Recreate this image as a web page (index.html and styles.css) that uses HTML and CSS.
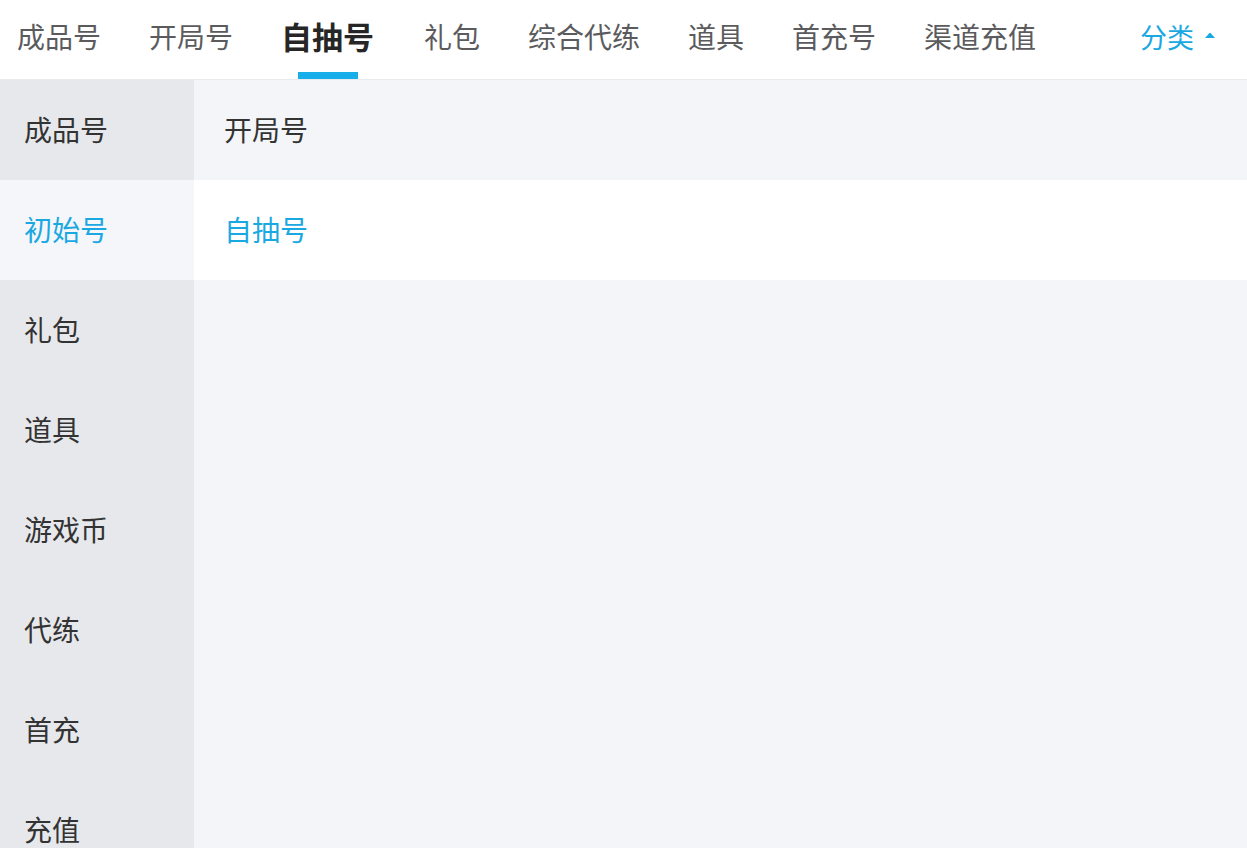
FILE: index.html
```html
<!DOCTYPE html>
<html lang="zh-CN">
<head>
    <meta charset="UTF-8">
    <meta name="viewport" content="width=device-width, initial-scale=1.0">
    <title>分类</title>
    <link rel="stylesheet" href="styles.css">
</head>
<body>
    <div class="page">
        <div class="top-bar">
            <div class="tabs">
                <span class="tab">成品号</span>
                <span class="tab">开局号</span>
                <span class="tab active">自抽号</span>
                <span class="tab">礼包</span>
                <span class="tab">综合代练</span>
                <span class="tab">道具</span>
                <span class="tab">首充号</span>
                <span class="tab">渠道充值</span>
            </div>
            <div class="category-toggle">
                分类
                <svg class="arrow" width="12" height="6" viewBox="0 0 12 6">
                    <path d="M1 6 L5 1.4 Q6 0.3 7 1.4 L11 6 Z" fill="#1aa8e2"/>
                </svg>
            </div>
        </div>

        <div class="content">
            <div class="side-menu">
                <div class="side-item">成品号</div>
                <div class="side-item selected">初始号</div>
                <div class="side-item">礼包</div>
                <div class="side-item">道具</div>
                <div class="side-item">游戏币</div>
                <div class="side-item">代练</div>
                <div class="side-item">首充</div>
                <div class="side-item">充值</div>
            </div>
            <div class="sub-list">
                <div class="sub-item">开局号</div>
                <div class="sub-item selected">自抽号</div>
            </div>
        </div>
    </div>
</body>
</html>
```

FILE: styles.css
```css
/* Página de categorias */
html, body {
    margin: 0;
    padding: 0;
    height: 100%;
    overflow: hidden;
}

body {
    font-family: "Noto Sans CJK SC", "Noto Sans", sans-serif;
    background: #f4f5f9;
    color: #333;
}

.page {
    display: flex;
    flex-direction: column;
    height: 100%;
}

.top-bar {
    height: 79px;
    background: #fff;
    border-bottom: 1px solid #e9eaee;
    display: flex;
    align-items: stretch;
    justify-content: space-between;
    flex-shrink: 0;
}

.tabs {
    display: flex;
    gap: 48px;
    padding-left: 17px;
}

.tab {
    position: relative;
    font-size: 28px;
    line-height: 72px;
    color: #5b5b5e;
    white-space: nowrap;
}

.tab.active {
    font-size: 31px;
    font-weight: bold;
    color: #262626;
    margin-right: 2px;
}

.tab.active::after {
    content: "";
    position: absolute;
    left: 17px;
    bottom: 0;
    width: 60px;
    height: 7px;
    background: #17aee9;
}

.category-toggle {
    display: flex;
    align-items: center;
    gap: 10px;
    padding-right: 31px;
    font-size: 27px;
    color: #1aa8e2;
    height: 72px;
}

.arrow {
    margin-top: -2px;
}

.content {
    flex: 1;
    display: flex;
    overflow: hidden;
}

.side-menu {
    width: 194px;
    background: #e7e8ec;
    flex-shrink: 0;
}

.side-item {
    height: 100px;
    line-height: 98px;
    padding-left: 24px;
    font-size: 28px;
    color: #333;
}

.side-item.selected {
    background: #f4f6fa;
    color: #1aa8e2;
}

.sub-list {
    flex: 1;
}

.sub-item {
    height: 100px;
    line-height: 98px;
    padding-left: 30px;
    font-size: 28px;
    color: #333;
}

.sub-item.selected {
    background: #fff;
    color: #1aa8e2;
}
```
